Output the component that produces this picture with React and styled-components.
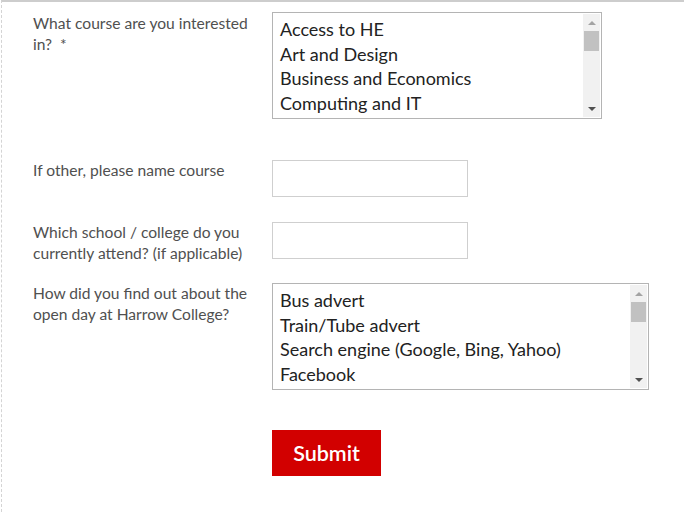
import React from 'react';
import styled, { createGlobalStyle } from 'styled-components';

const GlobalStyle = createGlobalStyle`
    html, body {
        margin: 0;
        padding: 0;
        background: #fff;
    }
    body {
        font-family: Lato, "Liberation Sans", sans-serif;
    }
`

const Page = styled.div`
    width: 684px;
    height: 512px;
    box-sizing: border-box;
    border-top: 2px solid #cdcdcd;
    border-left: 1px dashed #d4d4d4;
    margin-left: 1px;
    overflow: hidden;
`

const Form = styled.form`
    display: grid;
    grid-template-columns: 239px auto;
    align-items: start;
    padding: 10px 0 0 31px;
`

const Row = styled.div`
    display: contents;
`

const Label = styled.label`
    font-size: 15.6px;
    line-height: 20.5px;
    color: #505050;
    margin-top: ${props => props.offset || 0}px;
    margin-bottom: ${props => props.gap || 0}px;
    padding-right: 8px;
`

const Field = styled.div`
    margin-bottom: ${props => props.gap || 0}px;
`

const ListBox = styled.div`
    width: ${props => props.width}px;
    height: 107px;
    box-sizing: border-box;
    border: 1px solid #b4b4b4;
    display: flex;
    background: #fff;
`

const Options = styled.ul`
    flex: 1;
    list-style: none;
    margin: 0;
    padding: 4px 0 0 7px;
    overflow: hidden;
`

const Option = styled.li`
    font-size: 18px;
    line-height: 24.5px;
    color: #222;
    white-space: nowrap;
`

const Scrollbar = styled.div`
    width: 17px;
    margin: 1px 1px 1px 0;
    background: #f1f1f1;
    display: flex;
    flex-direction: column;
    align-items: center;
`

const Arrow = styled.div`
    height: 17px;
    width: 17px;
    display: flex;
    align-items: center;
    justify-content: center;

    &::before {
        content: '';
        border-left: 4px solid transparent;
        border-right: 4px solid transparent;
        ${props => props.up
            ? 'border-bottom: 4px solid #a3a3a3;'
            : 'border-top: 4px solid #505050;'}
    }
`

const Thumb = styled.div`
    width: 15px;
    height: 20px;
    background: #c1c1c1;
`

const Track = styled.div`
    flex: 1;
`

const TextInput = styled.input`
    display: block;
    width: 196px;
    height: 37px;
    box-sizing: border-box;
    border: 1px solid #cfcfcf;
    outline: none;
    font: inherit;
    padding: 0 8px;
`

const Submit = styled.button`
    width: 109px;
    height: 46px;
    background: #d20000;
    color: #fff;
    border: none;
    font-family: Lato, "Liberation Sans", sans-serif;
    font-size: 21.5px;
    font-weight: 600;
    cursor: pointer;
`

const Select = ({ width, items }) => (
    <ListBox width={width}>
        <Options>
            {items.map(item => <Option key={item}>{item}</Option>)}
        </Options>
        <Scrollbar>
            <Arrow up />
            <Thumb />
            <Track />
            <Arrow />
        </Scrollbar>
    </ListBox>
)

const courses = [
    'Access to HE',
    'Art and Design',
    'Business and Economics',
    'Computing and IT',
]

const sources = [
    'Bus advert',
    'Train/Tube advert',
    'Search engine (Google, Bing, Yahoo)',
    'Facebook',
]

const App = () => {
    return (
        <Page>
            <GlobalStyle />
            <Form onSubmit={e => e.preventDefault()}>
                <Row>
                    <Label offset={1}>What course are you interested in?&nbsp; *</Label>
                    <Field gap={41}>
                        <Select width={330} items={courses} />
                    </Field>
                </Row>
                <Row>
                    <Label>If other, please name course</Label>
                    <Field gap={25}>
                        <TextInput type="text" />
                    </Field>
                </Row>
                <Row>
                    <Label>Which school / college do you currently attend? (if applicable)</Label>
                    <Field gap={24}>
                        <TextInput type="text" />
                    </Field>
                </Row>
                <Row>
                    <Label>How did you find out about the open day at Harrow College?</Label>
                    <Field gap={40}>
                        <Select width={377} items={sources} />
                    </Field>
                </Row>
                <Row>
                    <span />
                    <Field>
                        <Submit type="submit">Submit</Submit>
                    </Field>
                </Row>
            </Form>
        </Page>
    )
}

export default App;
